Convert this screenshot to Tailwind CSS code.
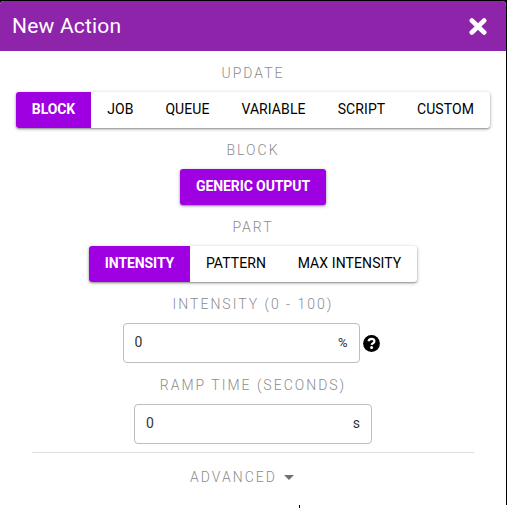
<!DOCTYPE html>
<html lang="en">
<head>
<meta charset="utf-8">
<title>New Action</title>
<script src="https://cdn.jsdelivr.net/npm/@tailwindcss/browser@4"></script>
</head>
<body class="h-[508px] w-[507px] overflow-hidden bg-white font-[Roboto,sans-serif] text-[14px]">
<div class="h-[505px] bg-black pt-px pr-px">
  <main class="flex h-[504px] flex-col items-center overflow-hidden rounded-t-[4px] bg-white">
    <header class="flex h-[50px] w-full shrink-0 items-center justify-between bg-[#8e24aa] pr-[19px] pl-3 text-white">
      <h1 class="text-[21px] leading-[50px] tracking-[0.2px]">New Action</h1>
      <svg class="mt-px h-[17px] w-[18px]" viewBox="0 0 18 17" fill="none" stroke="currentColor" stroke-width="4.6" stroke-linecap="round"><path d="M2.8 2.5L15.2 14.5M15.2 2.5L2.8 14.5"/></svg>
    </header>
    <h2 class="mt-3 h-5 leading-5 font-light tracking-[2px] text-[#8c8c8c]">UPDATE</h2>
    <div class="mt-[9px] flex h-9 w-[474px] rounded-[3px] leading-[34px] text-black shadow-[0_1px_4px_rgba(0,0,0,0.2),0_1px_2px_rgba(0,0,0,0.35)]">
      <button class="w-[75px] rounded-l-[3px] bg-[#9f00e2] pb-0.5 font-bold tracking-[-0.1px] text-white">BLOCK</button>
      <button class="w-[59px] pb-0.5 tracking-[0.1px]">JOB</button>
      <button class="w-[75px] pb-0.5 tracking-[0.1px]">QUEUE</button>
      <button class="w-[97px] pb-0.5 tracking-[0.1px]">VARIABLE</button>
      <button class="w-[79px] pb-0.5 tracking-[0.1px]">SCRIPT</button>
      <button class="w-[89px] pb-0.5 tracking-[0.1px]">CUSTOM</button>
    </div>
    <h2 class="mt-3 h-5 leading-5 font-light tracking-[2px] text-[#8c8c8c]">BLOCK</h2>
    <button class="mt-[9px] h-9 w-[146px] shrink-0 rounded-[3px] bg-[#9f00e2] pb-0.5 leading-[34px] font-bold tracking-[-0.1px] text-white shadow-[0_1px_4px_rgba(0,0,0,0.2),0_1px_2px_rgba(0,0,0,0.35)]">GENERIC OUTPUT</button>
    <h2 class="mt-3 h-5 leading-5 font-light tracking-[2px] text-[#8c8c8c]">PART</h2>
    <div class="mt-[9px] flex h-9 w-[328px] rounded-[3px] leading-[34px] text-black shadow-[0_1px_4px_rgba(0,0,0,0.2),0_1px_2px_rgba(0,0,0,0.35)]">
      <button class="w-[101px] rounded-l-[3px] bg-[#9f00e2] pb-0.5 font-bold tracking-[-0.1px] text-white">INTENSITY</button>
      <button class="w-[92px] pb-0.5 tracking-[0.1px]">PATTERN</button>
      <button class="w-[135px] pb-0.5 tracking-[0.1px]">MAX INTENSITY</button>
    </div>
    <h2 class="mt-3 h-5 leading-5 font-light tracking-[2px] text-[#8c8c8c]">INTENSITY (0 - 100)</h2>
    <div class="mt-[9px] mr-1 flex items-center gap-[3px]">
      <div class="flex h-10 w-[237px] items-center justify-between rounded-[4px] border border-[#bdbdbd] px-[11px] pb-px text-[#333]"><span>0</span><span class="text-[13px]">%</span></div>
      <svg class="h-[17px] w-[17px]" viewBox="0 0 17 17"><circle cx="8.5" cy="8.5" r="8.4" fill="#000"/><path d="M5.5 6.3Q6.1 3.9 8.6 3.9Q11.4 4 11.4 6.3Q11.4 7.5 10 8.2Q8.8 8.8 8.7 9.9" fill="none" stroke="#fff" stroke-width="2.2"/><circle cx="8.6" cy="12.6" r="1.5" fill="#fff"/></svg>
    </div>
    <h2 class="mt-3 h-5 leading-5 font-light tracking-[2px] text-[#8c8c8c]">RAMP TIME (SECONDS)</h2>
    <div class="mt-[9px] flex h-10 w-[238px] shrink-0 items-center justify-between rounded-[4px] border border-[#bdbdbd] px-[11px] pb-px text-[#333]"><span>0</span><span>s</span></div>
    <hr class="mt-2 w-[442px] border-t border-[#dedede]">
    <div class="mt-[14px] mr-[22px] flex h-5 items-center gap-[7px]">
      <h2 class="leading-5 font-light tracking-[2px] text-[#8c8c8c]">ADVANCED</h2>
      <svg class="h-[5px] w-[10px]" viewBox="0 0 10 5"><path d="M0 0H10L5 5Z" fill="#707070"/></svg>
    </div>
  </main>
</div>
<div class="ml-[299px] h-[3px] w-px bg-black"></div>
</body>
</html>
